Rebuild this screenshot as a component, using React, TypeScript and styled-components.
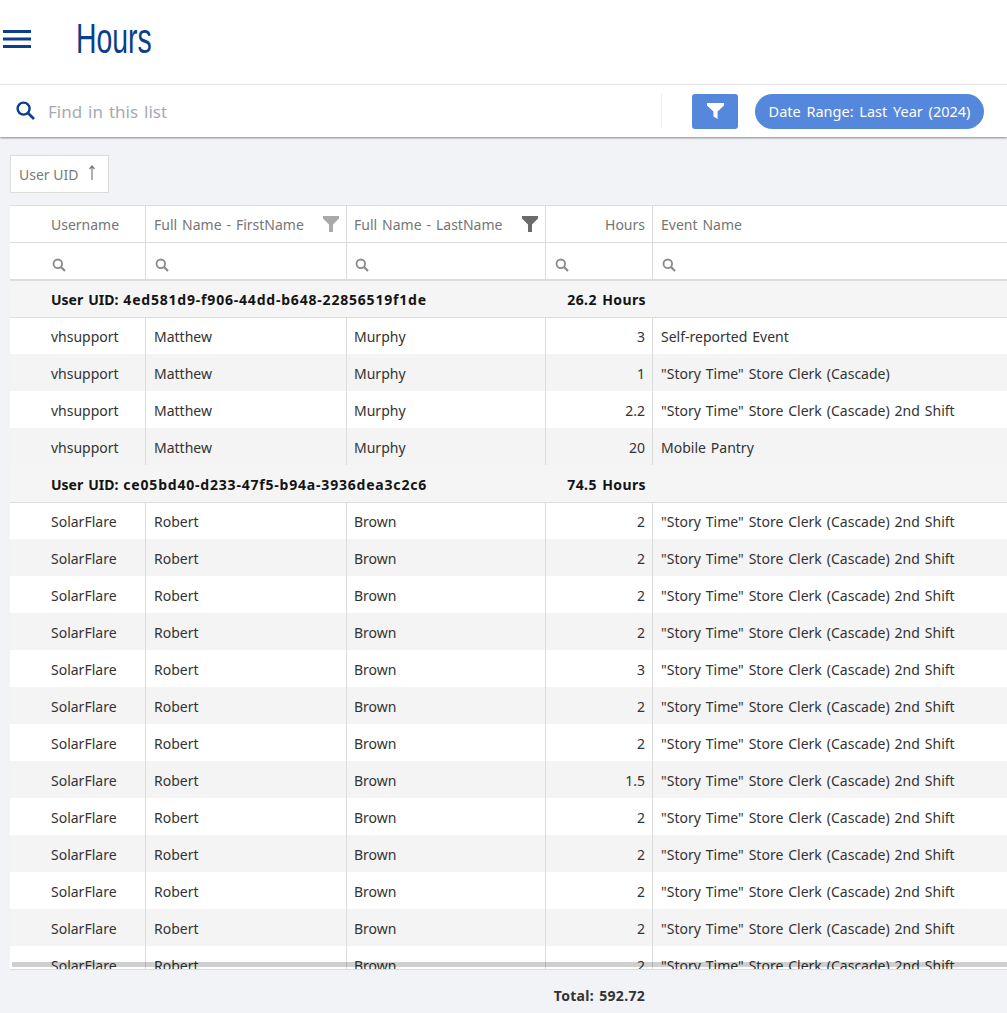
import React from "react";
import styled, { createGlobalStyle } from "styled-components";

const Global = createGlobalStyle`
  html, body { margin: 0; padding: 0; height: 100%; background: #f1f3f7; overflow: hidden; }
  body { font-family: "Noto Sans", "Open Sans", sans-serif; word-spacing: 1.3px; }
  * { box-sizing: border-box; }
`;

const Page = styled.div`
  width: 1007px;
  height: 1013px;
  display: flex;
  flex-direction: column;
  overflow: hidden;
`;
const Header = styled.header`
  height: 85px;
  background: #fff;
  border-bottom: 1px solid #ececee;
  display: flex;
  align-items: center;
  padding: 0 0 0 3px;
  color: #0b3e8d;
`;
const MenuIcon = styled.svg`
  width: 28px;
  height: 18px;
  margin-top: -6px;
  flex: none;
`;
const TitleWrap = styled.div`
  margin-left: 45px;
  margin-top: -9px;
  width: 100px;
`;
const Title = styled.h1`
  margin: 0;
  font-family: "Liberation Sans Narrow", "Liberation Sans", sans-serif;
  font-weight: 400;
  font-size: 43px;
  line-height: 50px;
  transform: scaleX(0.66);
  transform-origin: left center;
  white-space: nowrap;
`;
const Toolbar = styled.div`
  height: 52px;
  background: #fff;
  display: flex;
  align-items: center;
  padding: 0 0 0 16px;
  box-shadow: 0 1px 2px rgba(0, 0, 0, 0.45);
  position: relative;
`;
const SearchIcon = styled.svg`
  width: 19px;
  height: 19px;
  flex: none;
  margin-top: -1px;
`;
const Placeholder = styled.span`
  margin-left: 13px;
  width: 612px;
  font-size: 17px;
  word-spacing: 1.5px;
  color: #a8a9b3;
  white-space: nowrap;
`;
const Divider = styled.div`
  width: 1px;
  height: 34px;
  background: #eeeeef;
  margin-left: 1px;
`;
const FilterButton = styled.button`
  margin-left: 30px;
  width: 46px;
  height: 35px;
  border: 0;
  border-radius: 3px;
  background: #5588dc;
  display: flex;
  align-items: center;
  justify-content: center;
  padding: 0;
`;
const Pill = styled.div`
  margin-left: 17px;
  width: 229px;
  height: 35px;
  border-radius: 18px;
  background: #5588dc;
  color: #fff;
  font-size: 14.5px;
  word-spacing: 2px;
  display: flex;
  align-items: center;
  justify-content: center;
  white-space: nowrap;
`;
const Content = styled.main`
  flex: 1;
  padding: 18px 0 0 10px;
  display: flex;
  flex-direction: column;
  min-height: 0;
`;
const SortChip = styled.div`
  width: 99px;
  height: 38px;
  background: #fff;
  border: 1px solid #dcdcdc;
  display: flex;
  align-items: center;
  padding-left: 8px;
  font-size: 14px;
  word-spacing: 0;
  color: #7a7a7a;
  gap: 10px;
`;
const SortArrow = styled.svg`
  width: 8px;
  height: 16px;
  margin-top: -3px;
`;
const TableFrame = styled.div`
  position: relative;
  margin-top: 12px;
  height: 765px;
  overflow: hidden;
  border-bottom: 1px solid #dcdcdc;
`;
const HScroll = styled.div`
  position: absolute;
  left: 2px;
  right: 0;
  bottom: 2px;
  height: 5px;
  background: rgba(0, 0, 0, 0.19);
`;
const Row = styled.div<{ $alt?: boolean; $h?: number; $border?: string; $lift?: number }>`
  display: grid;
  grid-template-columns: 136px 201px 199px 107px 1fr;
  height: ${(p) => p.$h ?? 37}px;
  background: ${(p) => (p.$alt ? "#f4f4f4" : "#fff")};
  border-bottom: ${(p) => p.$border ?? "0"};
  & > div {
    padding-top: ${(p) => p.$lift ?? 0}px;
  }
  & > div:nth-child(3) {
    padding-left: 7px;
  }
`;
const HeadRow = styled(Row)`
  border-top: 1px solid #dcdcdc;
`;
const Cell = styled.div<{ $right?: boolean; $first?: boolean; $last?: boolean }>`
  display: flex;
  align-items: center;
  justify-content: ${(p) => (p.$right ? "flex-end" : "flex-start")};
  padding: ${(p) => (p.$first ? "0 0 0 41px" : "0 7px 0 8px")};
  border-right: ${(p) => (p.$last ? "0" : "1px solid #dcdcdc")};
  font-size: 14px;
  color: #333;
  white-space: nowrap;
  overflow: visible;
`;
const HeadCell = styled(Cell)`
  color: #757575;
  position: relative;
`;
const FunnelBadge = styled.svg`
  position: absolute;
  right: 7px;
  top: 10px;
  width: 16px;
  height: 16px;
`;
const GroupRow = styled.div<{ $after?: boolean }>`
  display: grid;
  grid-template-columns: 136px 400px 107px 1fr;
  height: ${(p) => (p.$after ? 38 : 37)}px;
  padding-top: ${(p) => (p.$after ? 1 : 0)}px;
  background: #f5f5f5;
  border-bottom: 1px solid #dcdcdc;
`;
const GroupLabel = styled.div<{ $right?: boolean }>`
  display: flex;
  align-items: center;
  justify-content: ${(p) => (p.$right ? "flex-end" : "flex-start")};
  font-size: 14px;
  font-weight: 700;
  color: #141414;
  white-space: nowrap;
  padding: ${(p) => (p.$right ? "0 7px 0 0" : "0")};
`;
const GroupName = styled(GroupLabel)`
  grid-column: 1 / span 2;
  padding-left: 41px;
  white-space: pre;
`;
const UidValue = styled.span`
  letter-spacing: 0.8px;
`;
const GroupHours = styled(GroupLabel)`
  grid-column: 3;
  letter-spacing: 0.4px;
`;
const SmallSearch = styled.svg`
  width: 14px;
  height: 14px;
  margin: 8px 0 0 1px;
`;
const Footer = styled.div`
  flex: 1;
  display: grid;
  grid-template-columns: 136px 201px 199px 99px;
  align-items: center;
`;
const Total = styled.div`
  grid-column: 1 / span 4;
  text-align: right;
  font-size: 14px;
  font-weight: 700;
  letter-spacing: 0.3px;
  color: #333;
  margin-top: 8px;
`;

const Magnifier = ({ color }: { color: string }) => (
  <SmallSearch viewBox="0 0 14 14" fill="none" stroke={color} strokeWidth="1.8">
    <circle cx="5.8" cy="5.8" r="4.3" />
    <path d="M9 9l4 4" strokeWidth="2.2" />
  </SmallSearch>
);

const Funnel = ({ color }: { color: string }) => (
  <FunnelBadge viewBox="0 0 16 16">
    <path d="M0 0h16v2.5L10 8.5V16H6V8.5L0 2.5z" fill={color} />
  </FunnelBadge>
);

type Rec = [string, string, string, string, string];

const SH = '"Story Time" Store Clerk (Cascade) 2nd Shift';
const group1: Rec[] = [
  ["vhsupport", "Matthew", "Murphy", "3", "Self-reported Event"],
  ["vhsupport", "Matthew", "Murphy", "1", '"Story Time" Store Clerk (Cascade)'],
  ["vhsupport", "Matthew", "Murphy", "2.2", SH],
  ["vhsupport", "Matthew", "Murphy", "20", "Mobile Pantry"],
];
const group2: Rec[] = ["2", "2", "2", "2", "3", "2", "2", "1.5", "2", "2", "2", "2", "2"].map(
  (h) => ["SolarFlare", "Robert", "Brown", h, SH] as Rec
);

const DataRows = ({ rows }: { rows: Rec[] }) => (
  <>
    {rows.map((r, i) => (
      <Row key={i} $alt={i % 2 === 1} $h={i === 0 ? 36 : 37} $lift={i === 0 ? 1 : 2}>
        <Cell $first>{r[0]}</Cell>
        <Cell>{r[1]}</Cell>
        <Cell>{r[2]}</Cell>
        <Cell $right>{r[3]}</Cell>
        <Cell $last>{r[4]}</Cell>
      </Row>
    ))}
  </>
);

export default function App() {
  return (
    <Page>
      <Global />
      <Header>
        <MenuIcon viewBox="0 0 28 18" fill="currentColor">
          <rect x="0" y="0" width="28" height="3" />
          <rect x="0" y="7.5" width="28" height="3" />
          <rect x="0" y="15" width="28" height="3" />
        </MenuIcon>
        <TitleWrap>
          <Title>Hours</Title>
        </TitleWrap>
      </Header>
      <Toolbar>
        <SearchIcon viewBox="0 0 19 19" fill="none" stroke="#0b3e8d" strokeWidth="2.4">
          <circle cx="7.6" cy="7.6" r="6" />
          <path d="M12 12l6 6" strokeWidth="2.6" />
        </SearchIcon>
        <Placeholder>Find in this list</Placeholder>
        <Divider />
        <FilterButton aria-label="Filter">
          <svg width="17" height="16" viewBox="0 0 17 16">
            <path d="M0 0h17v2.4L10.6 8.6V16l-4.2-2.6V8.6L0 2.4z" fill="#fff" />
          </svg>
        </FilterButton>
        <Pill>Date Range: Last Year (2024)</Pill>
      </Toolbar>
      <Content>
        <SortChip>
          User UID
          <SortArrow viewBox="0 0 8 16" fill="none" stroke="#7a7a7a" strokeWidth="1.2">
            <path d="M4 15V1M1.5 4L4 1l2.5 3" />
          </SortArrow>
        </SortChip>
        <TableFrame>
          <HeadRow $border="1px solid #dcdcdc" $h={38}>
            <HeadCell $first>Username</HeadCell>
            <HeadCell>
              Full Name - FirstName
              <Funnel color="#a9a9a9" />
            </HeadCell>
            <HeadCell>
              Full Name - LastName
              <Funnel color="#6b6b6b" />
            </HeadCell>
            <HeadCell $right>Hours</HeadCell>
            <HeadCell $last>Event Name</HeadCell>
          </HeadRow>
          <Row $h={38} $border="2px solid #dcdcdc">
            <Cell $first><Magnifier color="#8a8a8a" /></Cell>
            <Cell><Magnifier color="#8a8a8a" /></Cell>
            <Cell><Magnifier color="#8a8a8a" /></Cell>
            <Cell><Magnifier color="#8a8a8a" /></Cell>
            <Cell $last><Magnifier color="#8a8a8a" /></Cell>
          </Row>
          <GroupRow>
            <GroupName>User UID: <UidValue>4ed581d9-f906-44dd-b648-22856519f1de</UidValue></GroupName>
            <GroupHours $right>26.2 Hours</GroupHours>
          </GroupRow>
          <DataRows rows={group1} />
          <GroupRow $after>
            <GroupName>User UID: <UidValue>ce05bd40-d233-47f5-b94a-3936dea3c2c6</UidValue></GroupName>
            <GroupHours $right>74.5 Hours</GroupHours>
          </GroupRow>
          <DataRows rows={group2} />
          <HScroll />
        </TableFrame>
        <Footer>
          <Total>Total: 592.72</Total>
        </Footer>
      </Content>
    </Page>
  );
}
